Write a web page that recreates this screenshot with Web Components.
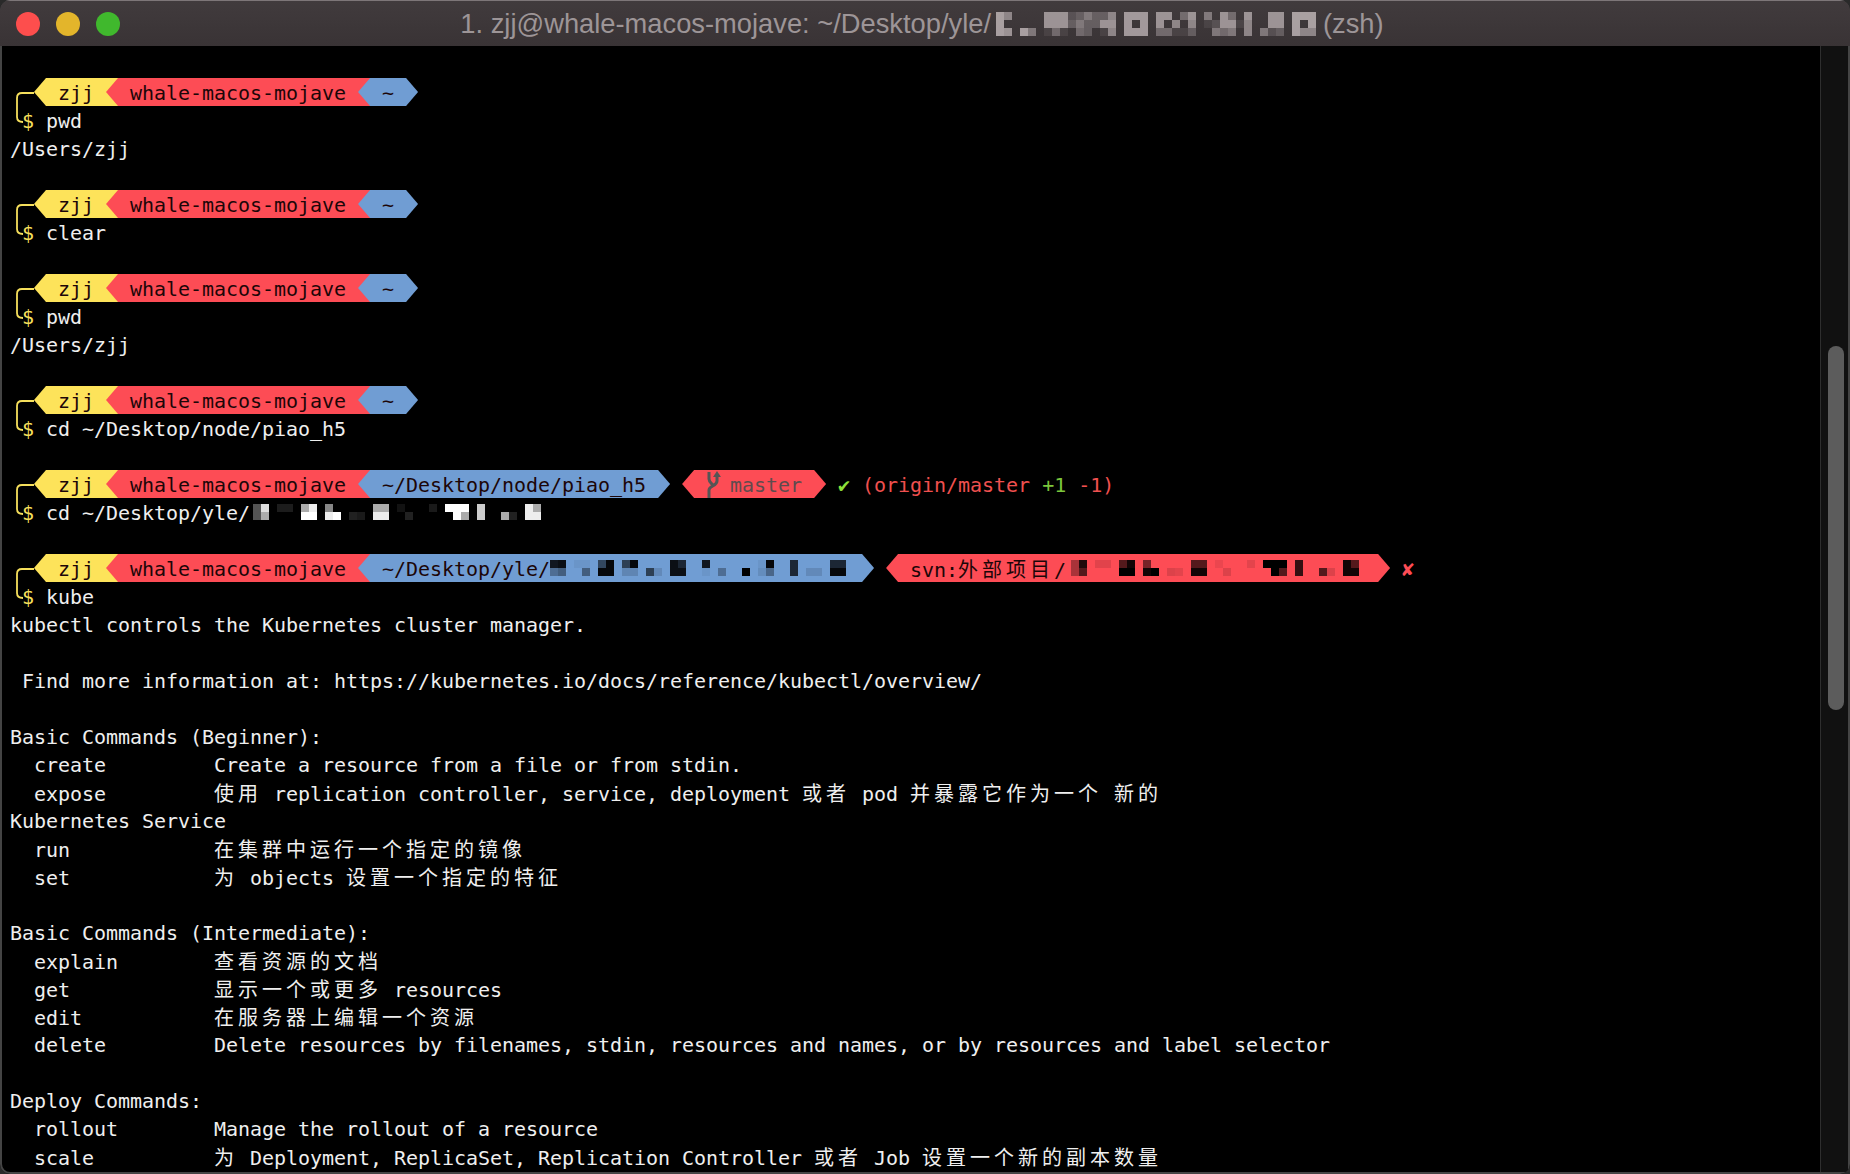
<!DOCTYPE html>
<html>
<head>
<meta charset="utf-8">
<title>zsh</title>
<style>
  html, body { margin: 0; padding: 0; background: #2a2a2a; }
</style>
</head>
<body>

<term-window>
  <title-bar slot="bar">
    <span>1. zjj@whale-macos-mojave: ~/Desktop/yle/</span><pixel-mosaic cols="40" fg="#c4babc" style="width:320px;margin:0 7px 0 5px" cells="0:.8,.8,.8 1:.6,0,.7 3:0,0,.8 4:0,0,.5 6:.7,.7,.1 7:.7,.7,.4 8:.7,.7,.1 9:.2,.3,0 10:.3,.5,.4 11:.5,.3,.3 12:.3,.3,0 13:.3,.7,.1 14:.6,.7,.6 16:.75,.75,.75 17:.75,0,.75 18:.75,.75,.75 20:.7,.7,.4 21:.7,0,.4 22:0,.6,.1 23:.4,0,.1 24:.7,.6,.3 26:.5,.1,0 27:0,.2,.5 28:.7,.7,.4 29:.4,.7,.5 30:0,.1,0 31:.7,.6,.6 33:0,0,.5 34:.7,.7,.2 35:.7,.7,.3 37:.8,.8,.8 38:.8,0,.6 39:.8,.8,.6"></pixel-mosaic><span>(zsh)</span>
  </title-bar>

  <term-line></term-line>
  <term-prompt>
    <prompt-seg kind="user">zjj</prompt-seg>
    <prompt-seg kind="host">whale-macos-mojave</prompt-seg>
    <prompt-seg kind="path">~</prompt-seg>
    <span slot="cmd">pwd</span>
  </term-prompt>
  <term-line>/Users/zjj</term-line>
  <term-line></term-line>
  <term-prompt>
    <prompt-seg kind="user">zjj</prompt-seg>
    <prompt-seg kind="host">whale-macos-mojave</prompt-seg>
    <prompt-seg kind="path">~</prompt-seg>
    <span slot="cmd">clear</span>
  </term-prompt>
  <term-line></term-line>
  <term-prompt>
    <prompt-seg kind="user">zjj</prompt-seg>
    <prompt-seg kind="host">whale-macos-mojave</prompt-seg>
    <prompt-seg kind="path">~</prompt-seg>
    <span slot="cmd">pwd</span>
  </term-prompt>
  <term-line>/Users/zjj</term-line>
  <term-line></term-line>
  <term-prompt>
    <prompt-seg kind="user">zjj</prompt-seg>
    <prompt-seg kind="host">whale-macos-mojave</prompt-seg>
    <prompt-seg kind="path">~</prompt-seg>
    <span slot="cmd">cd ~/Desktop/node/piao_h5</span>
  </term-prompt>
  <term-line></term-line>
  <term-prompt>
    <prompt-seg kind="user">zjj</prompt-seg>
    <prompt-seg kind="host">whale-macos-mojave</prompt-seg>
    <prompt-seg kind="path">~/Desktop/node/piao_h5</prompt-seg>
    <prompt-seg kind="vcs"><branch-icon></branch-icon><span style="color:#5f4b4e">master</span></prompt-seg>
    <span style="color:#8fe03a"> ✔ </span>
    <span style="color:#f0504f">(origin/master </span>
    <span style="color:#7cc63c">+1</span>
    <span style="color:#f0504f"> -1)</span>
    <span slot="cmd">cd ~/Desktop/yle/<pixel-mosaic id="hidden-a" fg="#ffffff" style="width:300px;padding:6px 0 0 3px" cols="36"></pixel-mosaic></span>
  </term-prompt>
  <term-line></term-line>
  <term-prompt>
    <prompt-seg kind="user">zjj</prompt-seg>
    <prompt-seg kind="host">whale-macos-mojave</prompt-seg>
    <prompt-seg kind="path">~/Desktop/yle/<pixel-mosaic fg="#000000" cols="37" style="width:300px;padding:6px 0 0 0" cells="0:.85,.3 1:.9,.4 3:.05,0 4:.05,.4 6:.55,.95 7:.95,.95 9:.6,.15 10:.95,.15 12:0,.6 13:0,.12 15:.9,.9 16:.75,.9 19:.85,.05 21:0,.3 24:0,1 26:.05,.1 27:.95,.35 30:.75,.75 32:0,.12 33:0,.12 35:.75,.95 36:.75,.95"></pixel-mosaic></prompt-seg>
    <prompt-seg kind="vcs">svn:<wide-text>外部项目</wide-text>/<pixel-mosaic id="hidden-b" fg="#000000" cols="36" style="width:300px;padding:6px 0 0 5px"></pixel-mosaic></prompt-seg>
    <span style="color:#fd4c55;font-weight:bold"> ✘</span>
    <span slot="cmd">kube</span>
  </term-prompt>
  <term-line>kubectl controls the Kubernetes cluster manager.</term-line>
  <term-line></term-line>
  <term-line> Find more information at: https://kubernetes.io/docs/reference/kubectl/overview/</term-line>
  <term-line></term-line>
  <term-line>Basic Commands (Beginner):</term-line>
  <term-line>  create         Create a resource from a file or from stdin.</term-line>
  <term-line>  expose         <wide-text>使用</wide-text> replication controller, service, deployment <wide-text>或者</wide-text> pod <wide-text>并暴露它作为一个</wide-text> <wide-text>新的</wide-text></term-line>
  <term-line>Kubernetes Service</term-line>
  <term-line>  run            <wide-text>在集群中运行一个指定的镜像</wide-text></term-line>
  <term-line>  set            <wide-text>为</wide-text> objects <wide-text>设置一个指定的特征</wide-text></term-line>
  <term-line></term-line>
  <term-line>Basic Commands (Intermediate):</term-line>
  <term-line>  explain        <wide-text>查看资源的文档</wide-text></term-line>
  <term-line>  get            <wide-text>显示一个或更多</wide-text> resources</term-line>
  <term-line>  edit           <wide-text>在服务器上编辑一个资源</wide-text></term-line>
  <term-line>  delete         Delete resources by filenames, stdin, resources and names, or by resources and label selector</term-line>
  <term-line></term-line>
  <term-line>Deploy Commands:</term-line>
  <term-line>  rollout        Manage the rollout of a resource</term-line>
  <term-line>  scale          <wide-text>为</wide-text> Deployment, ReplicaSet, Replication Controller <wide-text>或者</wide-text> Job <wide-text>设置一个新的副本数量</wide-text></term-line>
</term-window>

<script>
// cols 0-35 of the blurred folder name, shared by the cd line and the svn segment
const HIDDEN_NAME = '0:.33,.33 1:.87,.67 3:.11,0 4:.11,0 6:.67,1 7:.93,1 9:.53,.93 10:0,1 12:0,.13 13:0,.1 15:.67,.93 16:.67,.93 18:.07,0 19:0,.13 22:.1,0 24:1,0 25:1,1 26:1,.67 28:.8,.8 31:0,.67 32:0,.13 34:.93,.93 35:.67,.93';

// white-space: pre is inherited into the shadow trees, so templates carry no whitespace between tags
const tidy = html => html.replace(/>\s+</g, '><').trim();

class TermWindow extends HTMLElement {
  constructor() {
    super();
    this.attachShadow({ mode: 'open' }).innerHTML = tidy(`
      <style>
        :host {
          display: flex;
          flex-direction: column;
          box-sizing: border-box;
          width: 1850px;
          height: 1174px;
          overflow: hidden;
          border-radius: 10px;
          background: #000;
          box-shadow: inset 0 0 0 2px #444;
          color: #efefef;
          /* rows are 28px tall; the taller line box drops the glyphs 1px to sit as in iTerm */
          font: 20px/30px "DejaVu Sans Mono", "Noto Sans CJK SC", monospace;
          letter-spacing: -0.04px;
        }
        .body { flex: 1; display: flex; min-height: 0; margin: 0 2px 2px; }
        .screen { flex: 1; padding: 4px 0 0 8px; overflow: hidden; }
      </style>
      <slot name="bar"></slot>
      <div class="body">
        <div class="screen"><slot></slot></div>
        <term-scrollbar></term-scrollbar>
      </div>`);
  }
}

class TitleBar extends HTMLElement {
  constructor() {
    super();
    this.attachShadow({ mode: 'open' }).innerHTML = tidy(`
      <style>
        :host {
          display: grid;
          grid-template-columns: 1fr auto 1fr;
          align-items: center;
          height: 46px;
          box-sizing: border-box;
          border-top: 1px solid #7d7678;
          background: linear-gradient(#413b3d, #393335);
          color: #9d9597;
          font: 27.3px "Liberation Sans", Arial, sans-serif;
          letter-spacing: 0;
        }
        .lights { display: flex; gap: 16px; padding-left: 16px; }
        .lights i { width: 24px; height: 24px; border-radius: 50%; }
        .title { display: flex; align-items: center; padding-right: 6px; }
      </style>
      <div class="lights">
        <i style="background:#fd4e4d"></i>
        <i style="background:#e3b52b"></i>
        <i style="background:#40b82d"></i>
      </div>
      <div class="title"><slot></slot></div>`);
  }
}

class TermScrollbar extends HTMLElement {
  constructor() {
    super();
    this.attachShadow({ mode: 'open' }).innerHTML = tidy(`
      <style>
        :host {
          display: block;
          box-sizing: border-box;
          flex: none;
          width: 28px;
          padding: 300px 4px 0 7px;
          background: #111;
          border-left: 1px solid #2e2e2e;
        }
        div { height: 364px; border-radius: 8px; background: #5c5c5c; }
      </style>
      <div></div>`);
  }
}

class TermLine extends HTMLElement {
  constructor() {
    super();
    this.attachShadow({ mode: 'open' }).innerHTML = tidy(`
      <style>:host { display: block; height: 28px; white-space: pre; }</style>
      <slot></slot>`);
  }
}

class TermPrompt extends HTMLElement {
  constructor() {
    super();
    this.attachShadow({ mode: 'open' }).innerHTML = tidy(`
      <style>
        :host {
          display: grid;
          grid-template-columns: 24px 1fr;
          grid-template-rows: 28px 28px;
        }
        svg { grid-area: 1 / 1 / 3 / 2; }
        .top { grid-area: 1 / 2; display: flex; align-items: flex-start; }
        ::slotted(span) { white-space: pre; }
        .cmd { grid-area: 2 / 1 / 3 / 3; padding-left: 12px; white-space: pre; }
        .dollar { color: #f5df5c; margin-right: 12px; }
      </style>
      <svg width="24" height="56" viewBox="0 0 24 56" fill="none" stroke="#f5df5c" stroke-width="1.8">
        <path d="M24 15H12Q7 15 7 20V39Q7 44 13 44"/>
      </svg>
      <div class="top"><slot></slot></div>
      <div class="cmd"><span class="dollar">$</span><slot name="cmd"></slot></div>`);
  }
}

const SEG_COLORS = { user: '#fde35a', host: '#fd4c55', path: '#709dd3', vcs: '#fd4c55' };

class PromptSeg extends HTMLElement {
  constructor() {
    super();
    this.attachShadow({ mode: 'open' }).innerHTML = tidy(`
      <style>
        :host {
          display: block;
          flex: none;
          height: 28px;
          padding: 0 24px;
          color: #1c0608;
          white-space: pre;
        }
        :host([kind="host"]), :host([kind="path"]) { margin-left: -12px; }
        :host([kind="vcs"]) { margin-left: 12px; }
      </style>
      <slot></slot>`);
  }

  connectedCallback() {
    const kind = this.getAttribute('kind');
    const flat = kind === 'user' || kind === 'host';
    this.style.background = SEG_COLORS[kind];
    this.style.clipPath = flat
      ? 'polygon(0 50%, 12px 0, 100% 0, 100% 100%, 12px 100%)'
      : 'polygon(0 50%, 12px 0, calc(100% - 12px) 0, 100% 50%, calc(100% - 12px) 100%, 12px 100%)';
  }
}

class WideText extends HTMLElement {
  constructor() {
    super();
    this.attachShadow({ mode: 'open' }).innerHTML = tidy(`
      <style>
        :host {
          font-family: "Noto Sans CJK SC", sans-serif;
          letter-spacing: 4px;
        }
      </style>
      <slot></slot>`);
  }
}

class BranchIcon extends HTMLElement {
  constructor() {
    super();
    this.attachShadow({ mode: 'open' }).innerHTML = tidy(`
      <style>
        :host { display: inline-block; width: 24px; height: 28px; vertical-align: top; }
        svg { display: block; }
      </style>
      <svg width="16" height="28" viewBox="0 0 16 28" fill="none" stroke="#555" stroke-width="3">
        <path d="M3 28V20C3 16 11 16 11 11V6"/>
        <path d="M3 2V9C3 12 5 13 7 15"/>
        <path d="M11 1L15 7H7Z" fill="#555" stroke="none"/>
      </svg>`);
  }
}

class PixelMosaic extends HTMLElement {
  static get observedAttributes() { return ['cells']; }

  constructor() {
    super();
    this.attachShadow({ mode: 'open' });
  }

  connectedCallback() { this.render(); }
  attributeChangedCallback() { this.render(); }

  render() {
    const cells = (this.getAttribute('cells') || '').trim().split(/\s+/).filter(Boolean).map(c => {
      const [col, vals] = c.split(':');
      return { col: +col, vals: vals.split(',').map(Number) };
    });
    const rows = cells.length ? cells[0].vals.length : 2;
    const cols = +this.getAttribute('cols');
    const fg = this.getAttribute('fg');
    let rects = '';
    cells.forEach(c => c.vals.forEach((a, r) => {
      if (a > 0) rects += `<rect x="${c.col * 8}" y="${r * 8}" width="8" height="8" fill="${fg}" opacity="${a}"/>`;
    }));
    this.shadowRoot.innerHTML = tidy(`
      <style>
        :host { display: inline-block; box-sizing: border-box; vertical-align: top; }
        svg { display: block; filter: blur(.5px); }
      </style>
      <svg width="${cols * 8}" height="${rows * 8}" shape-rendering="crispEdges">${rects}</svg>`);
  }
}

document.getElementById('hidden-a').setAttribute('cells', HIDDEN_NAME);
document.getElementById('hidden-b').setAttribute('cells', HIDDEN_NAME);

customElements.define('term-window', TermWindow);
customElements.define('title-bar', TitleBar);
customElements.define('term-scrollbar', TermScrollbar);
customElements.define('term-line', TermLine);
customElements.define('term-prompt', TermPrompt);
customElements.define('prompt-seg', PromptSeg);
customElements.define('wide-text', WideText);
customElements.define('branch-icon', BranchIcon);
customElements.define('pixel-mosaic', PixelMosaic);
</script>
</body>
</html>
